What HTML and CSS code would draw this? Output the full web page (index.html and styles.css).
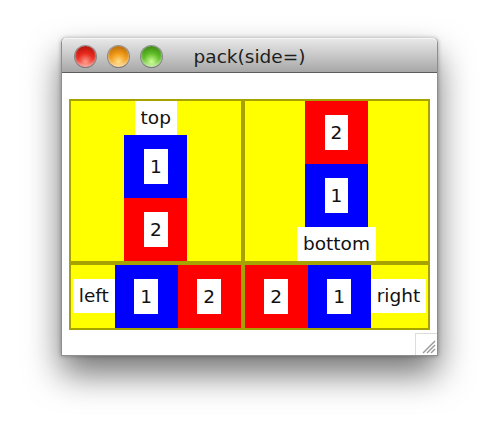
FILE: index.html
```html
<!DOCTYPE html>
<html lang="en">
<head>
    <meta charset="UTF-8">
    <title>pack(side=)</title>
    <link rel="stylesheet" href="styles.css">
</head>
<body>
    <div class="window">
        <div class="titlebar">
            <div class="lights">
                <span class="light red"></span>
                <span class="light orange"></span>
                <span class="light green"></span>
            </div>
            <div class="title">pack(side=)</div>
            <div></div>
        </div>
        <div class="content">
            <div class="grid">
                <div class="cell col">
                    <span class="label">top</span>
                    <div class="box blue"><span class="label">1</span></div>
                    <div class="box red"><span class="label">2</span></div>
                </div>
                <div class="cell col">
                    <div class="box red"><span class="label">2</span></div>
                    <div class="box blue"><span class="label">1</span></div>
                    <span class="label">bottom</span>
                </div>
                <div class="cell row">
                    <span class="label first">left</span>
                    <div class="box blue"><span class="label">1</span></div>
                    <div class="box red"><span class="label">2</span></div>
                </div>
                <div class="cell row">
                    <div class="box red"><span class="label">2</span></div>
                    <div class="box blue"><span class="label">1</span></div>
                    <span class="label last">right</span>
                </div>
            </div>
            <div class="grip">
                <svg width="21" height="21" viewBox="0 0 21 21">
                    <line x1="7" y1="19" x2="19" y2="7" stroke="#9a9a9a" stroke-width="1.4"/>
                    <line x1="11" y1="19" x2="19" y2="11" stroke="#9a9a9a" stroke-width="1.4"/>
                    <line x1="15" y1="19" x2="19" y2="15" stroke="#9a9a9a" stroke-width="1.4"/>
                </svg>
            </div>
        </div>
    </div>
</body>
</html>
```

FILE: styles.css
```css
html, body {
    height: 100%;
}
body {
    margin: 0;
    padding-top: 38px;
    box-sizing: border-box;
    background-color: #ffffff;
    font-family: "DejaVu Sans", "Noto Sans", sans-serif;
}
.window {
    width: 375px;
    margin-left: 61px;
    border: 1px solid #8e8e8e;
    border-top: none;
    border-radius: 5px 5px 0 0;
    box-shadow: 0 18px 34px rgba(0,0,0,0.55), 0 0 4px rgba(0,0,0,0.3);
    background-color: #fff;
}
.titlebar {
    height: 34px;
    display: grid;
    grid-template-columns: 1fr auto 1fr;
    align-items: center;
    background: linear-gradient(#e9e9e9, #c9c9c9 50%, #a7a7a7);
    border-bottom: 1px solid #5c5c5c;
    border-radius: 5px 5px 0 0;
    box-shadow: inset 0 1px 0 #f6f6f6;
}
.lights {
    display: flex;
    gap: 12px;
    padding-left: 13px;
    padding-top: 2px;
}
.light {
    width: 21px;
    height: 21px;
    border-radius: 50%;
    box-shadow: 0 0 0 1px rgba(60,60,60,0.45), inset 0 -2px 3px rgba(255,255,255,0.5);
}
.light.red {
    background: radial-gradient(circle at 50% 75%, #ff9a8a 0, #e8281c 45%, #9c0c06 100%);
}
.light.orange {
    background: radial-gradient(circle at 50% 75%, #ffe08a 0, #f19a16 45%, #a0570a 100%);
}
.light.green {
    background: radial-gradient(circle at 50% 75%, #cfff9a 0, #5fbd25 45%, #2f7312 100%);
}
.title {
    font-size: 18.5px;
    color: #1e1e1e;
    padding-top: 2px;
}
.content {
    position: relative;
    height: 282px;
    display: flex;
    align-items: center;
    justify-content: center;
}
.grid {
    display: grid;
    grid-template-columns: auto auto;
}
.cell {
    background-color: #ffff00;
    border: 2px solid #a6a300;
    display: flex;
    align-items: center;
}
.col {
    flex-direction: column;
}
.row {
    justify-content: flex-end;
}
.label {
    background-color: #ffffff;
    color: #111111;
    font-size: 18.5px;
    line-height: 34px;
    padding: 0 6px;
}
.label.first {
    margin-left: 2px;
}
.label.last {
    margin-right: 2px;
}
.box {
    width: 63px;
    height: 63px;
    display: flex;
    align-items: center;
    justify-content: center;
}
.box .label {
    line-height: 35px;
}
.blue {
    background-color: #0000ff;
}
.red {
    background-color: #ff0000;
}
.grip {
    position: absolute;
    right: 0;
    bottom: 0;
    width: 21px;
    height: 21px;
    border-left: 1px solid #dcdcdc;
    border-top: 1px solid #dcdcdc;
}
.grip svg {
    display: block;
}
```
